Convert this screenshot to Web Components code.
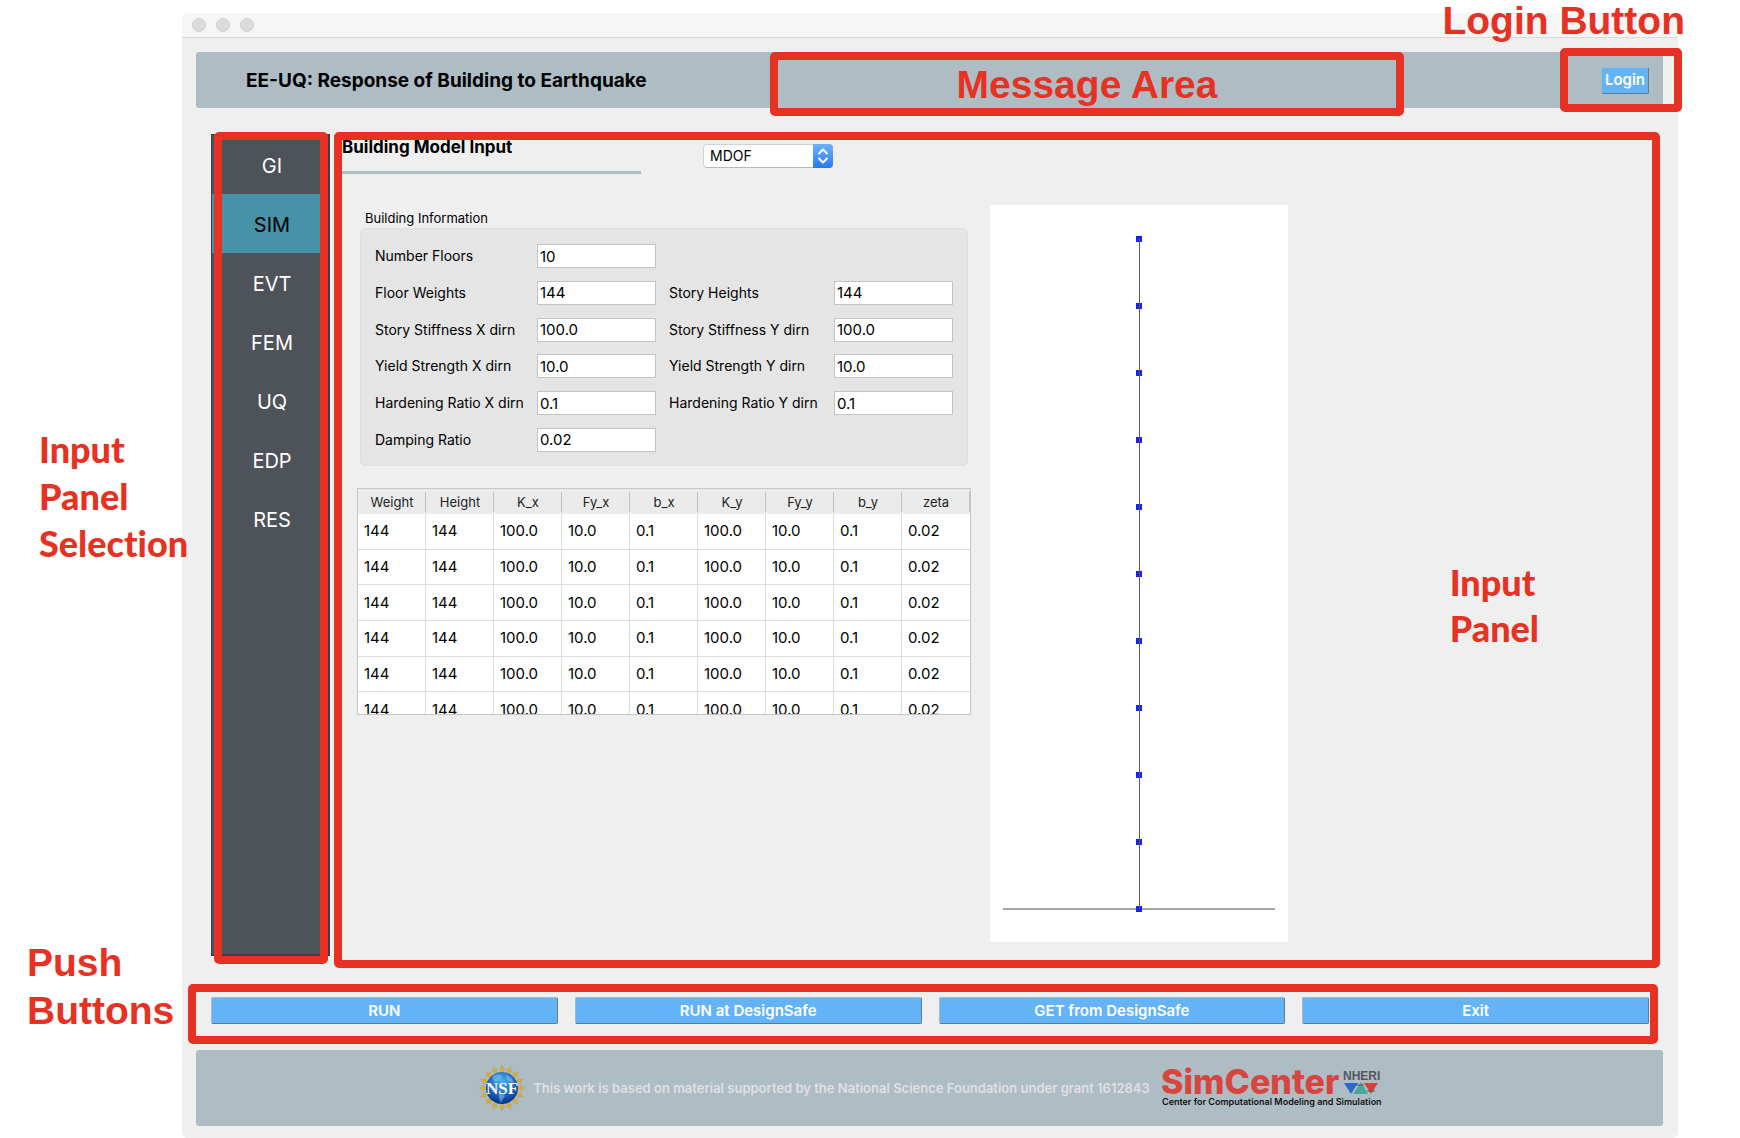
<!DOCTYPE html>
<html lang="en">
<head>
<meta charset="utf-8">
<title>EE-UQ: Response of Building to Earthquake</title>
<style>
  :root {
    --callout: #e73123;
    --bar: #aebcc4;
    --window: #efefef;
    --action: #64b3f6;
  }
  html, body { margin: 0; background: #fff; }
  body { font-family: Inter, "Liberation Sans", sans-serif; color: #000; }
</style>
</head>
<body>
<annotated-page></annotated-page>

<script>
const define = (name, markup, setup) => {
  const template = document.createElement('template');
  template.innerHTML = markup;
  customElements.define(name, class extends HTMLElement {
    constructor() {
      super();
      this.attachShadow({ mode: 'open' }).append(template.content.cloneNode(true));
      if (setup) setup(this.shadowRoot, this);
    }
  });
};

/* Red outline laid over the region that holds it */
define('callout-frame', `
<style>
  :host {
    position: absolute; inset: 0; z-index: 2; box-sizing: border-box; pointer-events: none;
    border: 8px solid var(--callout); border-radius: 5px;
    display: flex; align-items: center; justify-content: center;
  }
</style>
<slot></slot>`);

/* Red caption; "humanist" switches to the rounder face */
define('callout-label', `
<style>
  :host {
    display: block; color: var(--callout); white-space: nowrap;
    font: bold 39px/48px "Liberation Sans", Arial, sans-serif;
  }
  :host([humanist]) { font: 900 36px/47px Lato, Carlito, sans-serif; font-variant-ligatures: none; }
</style>
<slot></slot>`);

define('action-button', `
<style>
  :host { display: block; }
  button {
    display: block; width: 100%; height: 27px; padding: 0; box-sizing: border-box;
    font: 600 15px/20px Inter, sans-serif; color: #fff; background: var(--action);
    border: 1px solid; border-color: #9fbccb #5d7d8f #5d7d8f #9fbccb; border-radius: 2px;
  }
</style>
<button type="button"><slot></slot></button>`);

define('title-bar', `
<style>
  :host {
    display: flex; align-items: center; gap: 10px; height: 24px; padding-left: 10px;
    background: #f6f6f6; border-bottom: 1px solid #d9d9d9; border-radius: 6px 6px 0 0;
  }
  i { width: 14px; height: 14px; box-sizing: border-box; border-radius: 50%; background: #dcdcdc; border: 1px solid #d0d0d0; }
</style>
<i></i><i></i><i></i>`);

define('app-header', `
<style>
  :host {
    display: flex; height: 56px; margin: 14px 15px 0 14px; padding-left: 50px;
    background: var(--bar); border-radius: 3px; box-sizing: border-box;
  }
  h1 { flex: 0 0 524px; margin: 0; font: bold 19px/58px Inter, sans-serif; white-space: nowrap; }
  .message { flex: 1; position: relative; }
  .message callout-frame { inset: 0 0 -8px; padding-top: 2px; }
  .login { position: relative; flex: 0 0 103px; margin-left: 156px; display: flex; align-items: center; padding-left: 41px; box-sizing: border-box; }
  .login action-button { width: 48px; }
  .login callout-frame { inset: -4px -19px -4px 0; }
  .login callout-label { position: absolute; right: -22px; top: -55px; z-index: 3; }
</style>
<h1>EE-UQ: Response of Building to Earthquake</h1>
<div class="message"><callout-frame><callout-label>Message Area</callout-label></callout-frame></div>
<div class="login">
  <action-button>Login</action-button>
  <callout-frame></callout-frame>
  <callout-label>Login Button</callout-label>
</div>`);

define('panel-nav', `
<style>
  :host {
    display: block; position: relative; flex: 0 0 119px; box-sizing: border-box;
    margin: 2px 4px 12px 29px; background: #4e5259; border: 1px solid #3b4047; border-width: 1px 2px 2px 1px;
  }
  nav { display: flex; flex-direction: column; }
  button {
    height: 59px; padding: 2px 0 0 4px; border: 0; background: none; color: #fff;
    font: 20px/24px Inter, sans-serif;
  }
  button[aria-current] { background: #4592a9; color: #000; }
  callout-frame { inset: -3px 0 -10px 2px; }
</style>
<nav>
  <button type="button">GI</button>
  <button type="button" aria-current="page">SIM</button>
  <button type="button">EVT</button>
  <button type="button">FEM</button>
  <button type="button">UQ</button>
  <button type="button">EDP</button>
  <button type="button">RES</button>
</nav>
<callout-frame></callout-frame>`);

define('model-picker', `
<style>
  :host { display: flex; align-items: flex-start; gap: 62px; padding: 5px 8px 0; height: 73px; box-sizing: border-box; }
  h2 { flex: 0 0 299px; margin: 0; height: 34px; font: bold 17px/20px Inter, sans-serif; border-bottom: 3px solid var(--bar); }
  .combo { position: relative; width: 130px; height: 24px; margin-top: 7px; }
  select {
    appearance: none; width: 100%; height: 100%; padding: 0 26px 0 6px; margin: 0; color: #000;
    font: 14px/20px Inter, sans-serif; background: #fff; border: 1px solid #d2d2d2; border-bottom-color: #b9b9b9; border-radius: 4px;
  }
  svg { position: absolute; right: 0; top: 0; pointer-events: none; }
</style>
<h2>Building Model Input</h2>
<div class="combo">
  <select aria-label="Building model"><option>MDOF</option></select>
  <svg width="20" height="24" viewBox="0 0 20 24" aria-hidden="true">
    <defs><linearGradient id="g" x2="0" y2="1"><stop stop-color="#6cb3fa"/><stop offset="1" stop-color="#2a78f5"/></linearGradient></defs>
    <path d="M0 0H16Q20 0 20 4V20Q20 24 16 24H0Z" fill="url(#g)"/>
    <path d="M6 9.500L10 5.500L14 9.500M6 14.500L10 18.500L14 14.500" fill="none" stroke="#fff" stroke-width="1.800" stroke-linecap="round" stroke-linejoin="round"/>
  </svg>
</div>`);

define('building-form', `
<style>
  fieldset { border: 0; margin: 0; padding: 0; min-width: 0; }
  :host { display: block; }
  legend { padding: 0 0 2px 8px; font: 13px/16px Inter, sans-serif; }
  .box {
    margin: 0 3px; height: 238px; box-sizing: border-box; padding: 15px 14px 13px 14px;
    background: #e5e5e5; border: 1px solid #dfdfdf; border-radius: 5px;
    display: grid; grid-template-columns: 162px 119px 178px 119px; align-content: space-between;
  }
  label { font: 14px/24px Inter, sans-serif; white-space: nowrap; }
  .second { padding-left: 13px; }
  .first-col { grid-column: 1; }
  input {
    width: 100%; height: 24px; box-sizing: border-box; padding: 0 0 0 2px; margin: 0; color: #000;
    font: 15px/20px Inter, sans-serif; background: #fff; border: 1px solid #c3c3c3; border-radius: 0;
  }
</style>
<fieldset><legend>Building Information</legend><div class="box"></div></fieldset>`, root => {
  const rows = [
    [['Number Floors', '10']],
    [['Floor Weights', '144'], ['Story Heights', '144']],
    [['Story Stiffness X dirn', '100.0'], ['Story Stiffness Y dirn', '100.0']],
    [['Yield Strength X dirn', '10.0'], ['Yield Strength Y dirn', '10.0']],
    [['Hardening Ratio X dirn', '0.1'], ['Hardening Ratio Y dirn', '0.1']],
    [['Damping Ratio', '0.02']]
  ];
  root.querySelector('.box').innerHTML = rows.map((row, r) => row.map(([name, value], c) =>
    `<label for="f${r}${c}" class="${c ? 'second' : 'first-col'}">${name}</label><input id="f${r}${c}" type="text" value="${value}">`
  ).join('')).join('');
});

define('story-table', `
<style>
  :host { display: block; height: 227px; margin-top: 22px; box-sizing: border-box; border: 1px solid #c6c6c6; overflow: hidden; background: #fff; }
  table { width: 100%; height: 239px; table-layout: fixed; border-collapse: separate; border-spacing: 0; }
  th {
    height: 25px; padding: 0; font: 13px/20px Inter, sans-serif; color: #222;
    background: linear-gradient(#c2c2c2, #c2c2c2) right 3px / 1px 20px no-repeat #ebebeb; background-position: right 0 top 3px;
  }
  td { padding: 0 0 0 6px; font: 15px/20px Inter, sans-serif; border: solid #dcdcdc; border-width: 0 1px 1px 0; }
  td:last-child { border-right: 0; }
</style>
<table><thead><tr></tr></thead><tbody></tbody></table>`, root => {
  const heads = ['Weight', 'Height', 'K_x', 'Fy_x', 'b_x', 'K_y', 'Fy_y', 'b_y', 'zeta'];
  const story = ['144', '144', '100.0', '10.0', '0.1', '100.0', '10.0', '0.1', '0.02'];
  root.querySelector('thead tr').innerHTML = heads.map(h => `<th scope="col">${h}</th>`).join('');
  root.querySelector('tbody').innerHTML = Array(6).fill('<tr>' + story.map(v => `<td>${v}</td>`).join('') + '</tr>').join('');
});

define('building-plot', `
<style>
  :host { display: block; flex: 0 0 298px; height: 737px; background: #fff; }
  svg { display: block; }
</style>
<svg width="298" height="737" viewBox="0 0 298 737" role="img" aria-label="Building elevation">
  <path d="M13 704H285" stroke="#a6a6a6" stroke-width="2"/>
  <g class="nodes" fill="#1420f5"></g>
  <path d="M149.500 34V704" stroke="#5a5a5a"/>
</svg>`, root => {
  let nodes = '';
  for (let floor = 0; floor <= 10; floor++) nodes += `<rect x="146" y="${31 + floor * 67}" width="6" height="6"/>`;
  root.querySelector('.nodes').innerHTML = nodes;
});

define('input-panel', `
<style>
  :host { display: block; position: relative; flex: 1; margin-right: 18px; }
  .content { display: flex; align-items: flex-start; gap: 19px; padding: 0 23px 26px; }
  .left { flex: 0 0 614px; padding-top: 5px; }
  .name { position: absolute; right: 121px; top: 427px; }
  .name callout-label { line-height: 46px; }
</style>
<model-picker></model-picker>
<div class="content">
  <div class="left"><building-form></building-form><story-table></story-table></div>
  <building-plot></building-plot>
</div>
<callout-frame></callout-frame>
<div class="name"><callout-label humanist>Input<br>Panel</callout-label></div>`);

define('push-buttons', `
<style>
  :host { display: flex; gap: 17px; position: relative; margin: 29px 29px 0; }
  action-button { flex: 1; }
  callout-frame { inset: -13px -9px -20px -23px; }
</style>
<action-button>RUN</action-button>
<action-button>RUN at DesignSafe</action-button>
<action-button>GET from DesignSafe</action-button>
<action-button>Exit</action-button>
<callout-frame></callout-frame>`);

define('nsf-logo', `
<style>:host, svg { display: block; }</style>
<svg width="46" height="46" viewBox="-23 -23 46 46" role="img" aria-label="NSF">
  <defs><radialGradient id="globe" cx=".5" cy=".3" r=".7">
    <stop stop-color="#4fb2ea"/><stop offset=".5" stop-color="#2272c4"/><stop offset="1" stop-color="#0b2f86"/>
  </radialGradient></defs>
  <g class="rays" fill="#dcae35" stroke="#b98b25" stroke-width=".3"></g>
  <circle r="16" fill="url(#globe)"/>
  <path d="M-9 -12Q-3 -15 0 -12Q-2 -7 -6 -6Q-10 -7 -9 -12ZM4 -13Q10 -11 12 -6Q7 -5 5 -8ZM-3 5Q2 5 3 8Q0 12 -1 15Q-4 10 -3 5Z" fill="#8ccdf0" opacity=".5"/>
  <text y="6" text-anchor="middle" font-family="Liberation Serif" font-weight="bold" font-size="17" fill="#fff">NSF</text>
</svg>`, root => {
  let rays = '';
  for (let i = 0; i < 16; i++) {
    rays += `<path transform="rotate(${i * 22.5})" d="M-2 -15L-1 -18L-3 -19L-1 -20L0 -23L1 -20L3 -19L1 -18L2 -15Z"/>`;
  }
  root.querySelector('.rays').innerHTML = rays;
});

define('simcenter-logo', `
<style>:host, svg { display: block; flex: none; overflow: visible; }</style>
<svg width="218" height="44" viewBox="0 0 218 44" role="img" aria-label="SimCenter, Center for Computational Modeling and Simulation">
  <text x="-1" y="28" font-family="Inter" font-weight="800" font-size="34" fill="#d8453f">SimCenter</text>
  <text x="181" y="14" font-family="Liberation Sans" font-weight="bold" font-size="12" fill="#55585b">NHERI</text>
  <path d="M182 17H196L189 28Z" fill="#2b68cf"/>
  <path d="M202 17H216L209 28Z" fill="#d8403c"/>
  <path d="M191 28H206L199 16Z" fill="#4ba69b"/>
  <path d="M194 19H202M205 25H213" stroke="#55585b"/>
  <text x="0" y="39" font-family="Inter" font-weight="600" font-size="9" fill="#111">Center for Computational Modeling and Simulation</text>
</svg>`);

define('app-footer', `
<style>
  :host {
    display: flex; align-items: center; justify-content: center; height: 76px; margin: 26px 15px 12px 14px;
    background: var(--bar); border-radius: 3px;
  }
  p { margin: 0 12px 0 8px; font: 600 13px/16px Inter, sans-serif; color: #dfe1e3; white-space: nowrap; }
</style>
<nsf-logo></nsf-logo>
<p>This work is based on material supported by the National Science Foundation under grant 1612843</p>
<simcenter-logo></simcenter-logo>`);

define('app-window', `
<style>
  :host { display: flex; flex-direction: column; background: var(--window); border-radius: 6px; }
  main { display: flex; flex: 1; margin-top: 24px; }
</style>
<title-bar></title-bar>
<app-header></app-header>
<main><panel-nav></panel-nav><input-panel></input-panel></main>
<push-buttons></push-buttons>
<app-footer></app-footer>`);

define('annotated-page', `
<style>
  :host { display: flex; position: relative; min-height: 100vh; box-sizing: border-box; padding: 13px 62px 0 182px; }
  app-window { flex: 1; }
  .side { position: absolute; z-index: 3; }
  .selection { left: 39px; top: 426px; }
  .push { left: 27px; bottom: 103px; }
</style>
<app-window></app-window>
<callout-label class="side selection" humanist>Input<br>Panel<br>Selection</callout-label>
<callout-label class="side push">Push<br>Buttons</callout-label>`);
</script>
</body>
</html>
